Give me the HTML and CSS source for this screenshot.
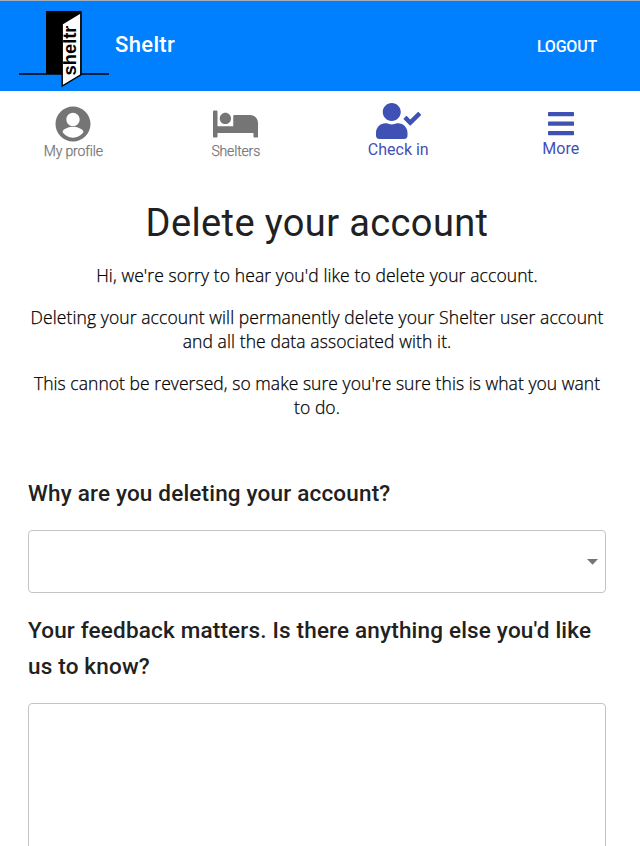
FILE: index.html
```html
<!DOCTYPE html>
<html lang="en">
<head>
<meta charset="utf-8">
<title>Sheltr</title>
<link rel="stylesheet" href="styles.css">
</head>
<body>
<header class="topbar">
  <svg class="logo" width="92" height="80" viewBox="0 0 92 80">
    <path d="M1 66H91" stroke="#000" stroke-width="1.7"/>
    <path d="M28 3H63.5V66H28Z" fill="#000"/>
    <path d="M44.2 15.8L62.8 4.6V66.8L44.2 78Z" fill="#fff" stroke="#000" stroke-width="1.4"/>
    <text class="logo-text" transform="translate(58 67.500) rotate(-90)" textLength="50" lengthAdjust="spacingAndGlyphs">sheltr</text>
  </svg>
  <span class="brand">Sheltr</span>
  <button class="logout">LOGOUT</button>
</header>
<nav class="tabs">
  <a class="tab profile"><svg width="42" height="42" viewBox="0 0 24 24"><path d="M12 2C6.48 2 2 6.48 2 12s4.48 10 10 10 10-4.480 10-10S17.520 2 12 2zm0 3.600c2.100 0 3.800 1.700 3.800 3.800S14.100 13.200 12 13.200 8.200 11.500 8.200 9.400 9.900 5.600 12 5.600zm0 14.200c-2.500 0-4.710-1.280-6-3.220.03-1.990 4-3.080 6-3.080 1.990 0 5.970 1.090 6 3.080-1.290 1.940-3.500 3.220-6 3.220z"/></svg><span>My profile</span></a>
  <a class="tab shelters"><svg width="45" height="36" viewBox="0 0 640 512"><path d="M176 256c44.110 0 80-35.890 80-80s-35.890-80-80-80-80 35.890-80 80 35.890 80 80 80zm352-128H304c-8.840 0-16 7.160-16 16v144H64V80c0-8.840-7.160-16-16-16H16C7.160 64 0 71.160 0 80v352c0 8.840 7.160 16 16 16h32c8.840 0 16-7.160 16-16v-48h512v48c0 8.840 7.160 16 16 16h32c8.840 0 16-7.160 16-16V240c0-61.860-50.140-112-112-112z"/></svg><span>Shelters</span></a>
  <a class="tab active checkin"><svg width="45" height="36" viewBox="0 0 640 512"><path d="M224 256c70.7 0 128-57.3 128-128S294.7 0 224 0 96 57.3 96 128s57.3 128 128 128zm89.600 32h-16.700c-22.200 10.200-46.900 16-72.900 16s-50.600-5.800-72.900-16h-16.700C60.200 288 0 348.200 0 422.400V464c0 26.500 21.500 48 48 48h352c26.500 0 48-21.500 48-48v-41.600c0-74.200-60.200-134.400-134.400-134.400zm323-128.400l-27.800-28.100c-4.600-4.700-12.100-4.700-16.800-.1l-104.800 104-45.500-45.800c-4.600-4.700-12.100-4.700-16.800-.1l-28.100 27.900c-4.700 4.600-4.700 12.100-.1 16.800l81.700 82.300c4.600 4.700 12.100 4.700 16.800.1l141.300-140.200c4.600-4.700 4.700-12.200.1-16.800z"/></svg><span>Check in</span></a>
  <a class="tab active more"><svg width="26" height="24" viewBox="0 0 26 24"><rect y="0" width="26" height="4.200" rx=".6"/><rect y="9.600" width="26" height="4.200" rx=".6"/><rect y="19" width="26" height="4.200" rx=".6"/></svg><span>More</span></a>
</nav>
<main class="content">
  <section class="intro">
    <h1>Delete your account</h1>
    <p>Hi, we're sorry to hear you'd like to delete your account.</p>
    <p>Deleting your account will permanently delete your Shelter user account<br>and all the data associated with it.</p>
    <p class="warning">This cannot be reversed, so make sure you're sure this is what you want<br>to do.</p>
  </section>
  <form class="feedback">
    <h2>Why are you deleting your account?</h2>
    <div class="field select"><svg width="11" height="6" viewBox="0 0 11 6"><path d="M0 0H11L5.500 5.700Z" fill="#757575"/></svg></div>
    <h2>Your feedback matters. Is there anything else you'd like<br>us to know?</h2>
    <div class="field area"></div>
  </form>
</main>
</body>
</html>
```
FILE: styles.css
```css
* { box-sizing: border-box; }
html, body { height: 100%; }
body {
  margin: 0;
  overflow: hidden;
  background: #fff;
  font-family: Roboto, "Liberation Sans", sans-serif;
}
.topbar {
  height: 91px;
  display: flex;
  align-items: center;
  padding: 0 43px 0 18px;
  background: #007fff;
  border-top: 1px solid #a3aebb;
  color: #fff;
}
.logo { display: block; margin-top: 3px; }
.logo-text { font: bold 18px "Liberation Sans", sans-serif; }
.brand { margin: -3px 0 0 5px; font-size: 22px; font-weight: 500; letter-spacing: .35px; }
.logout {
  margin-left: auto;
  padding: 0;
  border: 0;
  background: none;
  color: #fff;
  font: 500 16px Roboto, sans-serif;
  letter-spacing: -.2px;
}
.tabs {
  display: grid;
  grid-template-columns: repeat(4, 162.5px);
  height: 90px;
  margin-left: -8px;
}
.tab {
  display: flex;
  flex-direction: column;
  align-items: center;
  color: #757575;
  font-size: 14px;
  font-weight: 300;
  line-height: 18px;
}
.tab svg { fill: currentColor; }
.active { color: #3f51b5; font-size: 16px; font-weight: 400; }
.profile { padding-top: 12px; }
.profile span { margin-top: -3px; }
.profile span, .shelters span { letter-spacing: -.15px; -webkit-text-stroke: .25px; }
.shelters { padding-top: 15px; }
.checkin { padding-top: 12px; }
.checkin span { margin-top: 2px; }
.more { padding-top: 21px; }
.more span { margin-top: 4px; }
.content { padding: 0 34px 0 28px; }
.intro { height: 294px; padding-top: 17px; text-align: center; white-space: nowrap; }
h1 {
  margin: 0 0 15px;
  color: #212121;
  font-size: 38px;
  font-weight: 400;
  line-height: 50px;
  letter-spacing: .38px;
}
.intro p {
  margin: 0 0 18px;
  color: #000;
  font: 300 17.500px/24px "Open Sans", sans-serif;
  letter-spacing: .1px;
  -webkit-text-stroke: .25px;
}
.intro .warning { letter-spacing: .05px; }
h2 {
  margin: 0;
  color: #212121;
  font-size: 22.500px;
  font-weight: 500;
  line-height: 36px;
  letter-spacing: .18px;
  white-space: nowrap;
}
.field { border: 1px solid #c4c4c4; border-radius: 4px; }
.select {
  display: flex;
  align-items: center;
  justify-content: flex-end;
  height: 63px;
  margin: 19px 0;
  padding-right: 7px;
}
.area { height: 180px; margin-top: 19px; }
```
